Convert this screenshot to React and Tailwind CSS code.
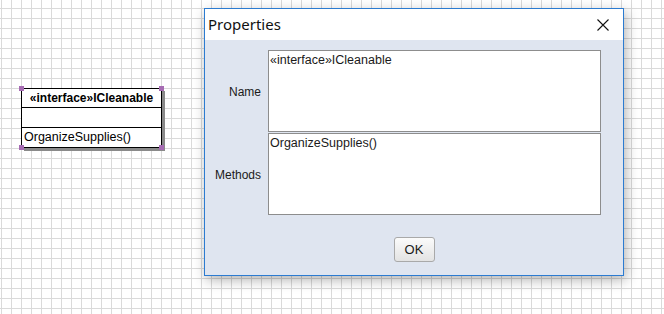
export default function App() {
  return (
    <div
      className="relative w-[664px] h-[314px] overflow-hidden bg-white bg-[linear-gradient(to_right,#dadada_1px,transparent_1px),linear-gradient(to_bottom,#dadada_1px,transparent_1px)] bg-[size:10px_10px] bg-[position:1px_8px]"
      style={{ fontFamily: '"Liberation Sans", Arial, sans-serif' }}
    >
      {/* UML class on canvas */}
      <div className="absolute left-[21px] top-[88px] w-[141px]">
        <div className="relative bg-white border border-black shadow-[3px_3px_0_#8a8a8a] text-[12px] leading-none text-black">
          <div className="h-[19px] flex items-center justify-center font-bold border-b border-black">
            «interface»ICleanable
          </div>
          <div className="h-[20px] border-b border-black" />
          <div className="h-[19px] flex items-center pl-[2px] text-[12.5px]">OrganizeSupplies()</div>
          <div className="absolute -left-[3px] -top-[3px] w-[5px] h-[5px] bg-[#a66bb3]" />
          <div className="absolute -right-[3px] -top-[3px] w-[5px] h-[5px] bg-[#a66bb3]" />
          <div className="absolute -left-[3px] -bottom-[3px] w-[5px] h-[5px] bg-[#a66bb3]" />
          <div className="absolute -right-[3px] -bottom-[3px] w-[5px] h-[5px] bg-[#a66bb3]" />
        </div>
      </div>

      {/* Properties dialog */}
      <div className="absolute left-[204px] top-[8px] w-[420px] h-[268px] border border-[#2b7bd1] bg-white shadow-[2px_4px_12px_rgba(0,0,0,0.3)] flex flex-col">
        <div className="h-[31px] flex items-center justify-between pl-[3px] pr-[14px]">
          <span className="text-[15px] text-[#111]" style={{ fontFamily: '"Noto Sans", "Liberation Sans", sans-serif' }}>Properties</span>
          <svg width="12" height="12" viewBox="0 0 12 12" className="mt-[1px]">
            <path d="M0.5 0.5 L11.5 11.5 M11.5 0.5 L0.5 11.5" stroke="#111" strokeWidth="1.1" fill="none" />
          </svg>
        </div>
        <div className="flex-1 bg-[#dfe5f0] flex flex-col pt-[10px] text-[12px] text-[#1a1a1a]">
          <div className="flex items-center h-[82px]">
            <div className="w-[63px] text-right pr-[7px] mt-[2px]">Name</div>
            <div className="w-[333px] h-full bg-white border border-[#8d8d8d] px-[1px] pt-[2px] leading-[14px] text-[12.5px]">«interface»ICleanable</div>
          </div>
          <div className="flex items-center h-[82px] mt-[1px]">
            <div className="w-[63px] text-right pr-[7px] mt-[2px]">Methods</div>
            <div className="w-[333px] h-full bg-white border border-[#8d8d8d] px-[1px] pt-[2px] leading-[14px] text-[12.5px]">OrganizeSupplies()</div>
          </div>
          <div className="flex justify-center mt-[22px]">
            <div className="w-[41px] h-[25px] rounded-[3px] border border-[#a9a9a9] bg-[linear-gradient(to_bottom,#fbfbfb,#e3e3e3)] flex items-center justify-center text-[13px] text-[#1a1a1a]">
              OK
            </div>
          </div>
        </div>
      </div>
    </div>
  );
}
